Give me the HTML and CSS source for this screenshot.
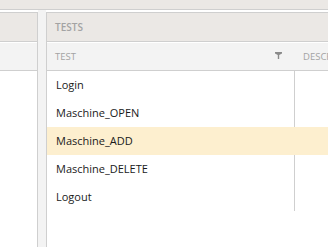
FILE: index.html
```html
<!DOCTYPE html>
<html>
	<head>
		<meta charset="UTF-8">
		<title>Tests</title>
	<link rel="stylesheet" href="styles.css">
	</head>
	<body>
		<div class="topbar"></div>
		<div class="main">
			<div class="side">
				<div class="panel-head"></div>
				<div class="col-head"></div>
			</div>
			<div class="splitter"></div>
			<div class="panel">
				<div class="panel-head">TESTS</div>
				<div class="col-head">
					<div class="col col-test">TEST
						<svg class="filter" width="7" height="7" viewBox="0 0 7 7"><path d="M0 0H7V1.5L4.2 3V7H2.8V3L0 1.5Z" fill="#8a8a8a"/></svg>
					</div>
					<div class="col col-desc">DESCRIPTION</div>
				</div>
				<ul class="rows">
					<li class="row"><span class="cell">Login</span></li>
					<li class="row"><span class="cell">Maschine_OPEN</span></li>
					<li class="row selected"><span class="cell">Maschine_ADD</span></li>
					<li class="row"><span class="cell">Maschine_DELETE</span></li>
					<li class="row"><span class="cell">Logout</span></li>
				</ul>
			</div>
		</div>
	</body>
</html>
```
FILE: styles.css
```css
*{
	margin: 0;
	padding: 0;
	box-sizing: border-box;
}
body{
	width: 328px;
	height: 247px;
	overflow: hidden;
	background: #fff;
	font-family: "Open Sans", "Noto Sans", sans-serif;
}
.topbar{
	height: 10px;
	background: #ebe8e5;
	border-bottom: 1px solid #cfcfcf;
}
.main{
	display: flex;
	height: 237px;
}
.side{
	width: 38px;
	flex-shrink: 0;
	margin-top: 2px;
	border-top: 1px solid #cfcfcf;
	border-right: 1px solid #cfcfcf;
}
.splitter{
	width: 8px;
	flex-shrink: 0;
	background: #f3f3f3;
}
.panel{
	flex: 1;
	min-width: 0;
	margin-top: 2px;
	border-top: 1px solid #cfcfcf;
	border-left: 1px solid #cfcfcf;
	overflow: hidden;
}
.panel-head{
	height: 29px;
	background: #ebe8e5;
	border-bottom: 1px solid #cfcfcf;
	padding-left: 8px;
	line-height: 28px;
	font-size: 10px;
	font-weight: 600;
	color: #a3a3a3;
}
.col-head{
	display: flex;
	height: 29px;
	background: #f3f3f3;
	border-bottom: 1px solid #cfcfcf;
	border-top: 1px solid #fff;
	font-size: 9.5px;
	color: #a3a3a3;
	line-height: 27px;
}
.col{
	white-space: nowrap;
	flex-shrink: 0;
}
.col-test{
	width: 247px;
	padding-left: 8px;
	position: relative;
}
.col-desc{
	padding-left: 9px;
}
.filter{
	position: absolute;
	left: 228px;
	top: 9px;
}
.rows{
	list-style: none;
	width: 248px;
	border-right: 1px solid #cfcfcf;
}
.row{
	height: 28px;
	line-height: 28px;
	padding-left: 9px;
	font-size: 11px;
	color: #1a1a1a;
}
.row.selected{
	background: #fdefcf;
	margin-right: -90px;
}
```
